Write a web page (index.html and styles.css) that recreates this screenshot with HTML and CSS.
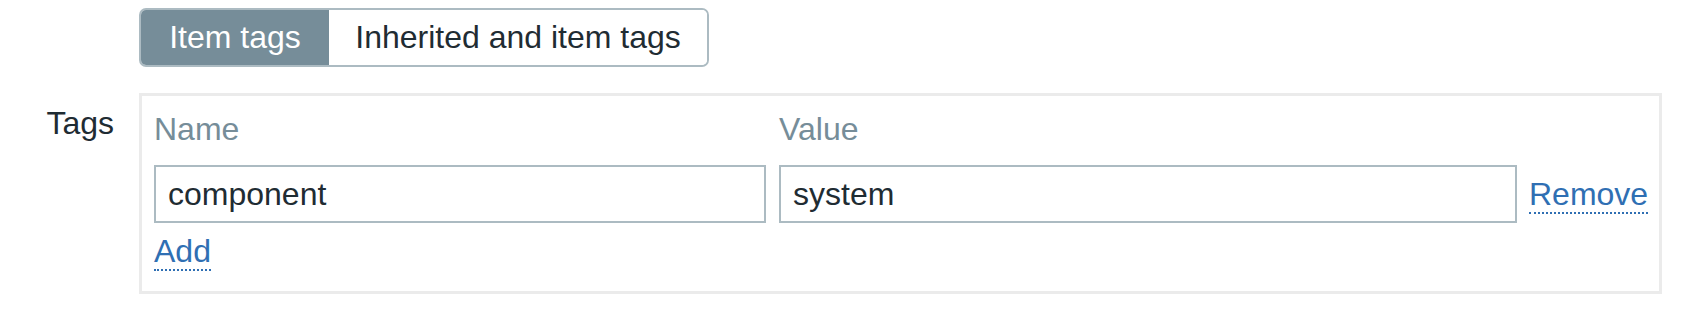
FILE: index.html
```html
<!DOCTYPE html>
<html lang="en">

<head>
    <meta charset="UTF-8">
    <meta name="viewport" content="width=device-width, initial-scale=1.0">
    <title>Tags</title>
    <link rel="stylesheet" href="styles.css">
</head>

<body>
    <div class="form">
        <!-- 切换标签来源 -->
        <div class="form-row top-row">
            <div class="form-label"></div>
            <div class="form-field">
                <div class="radio-segmented">
                    <span class="seg seg-item active">Item tags</span>
                    <span class="seg seg-inherited">Inherited and item tags</span>
                </div>
            </div>
        </div>
        <div class="form-row">
            <div class="form-label tags-label">Tags</div>
            <div class="form-field">
                <div class="tags-box">
                    <table class="tags-table">
                        <thead>
                            <tr>
                                <th class="col-name">Name</th>
                                <th class="col-value">Value</th>
                                <th></th>
                            </tr>
                        </thead>
                        <tbody>
                            <tr>
                                <td><input class="text-input name-input" type="text" value="component"></td>
                                <td><input class="text-input value-input" type="text" value="system"></td>
                                <td class="action-cell"><span class="link-action">Remove</span></td>
                            </tr>
                            <tr>
                                <td colspan="3" class="add-cell"><span class="link-action">Add</span></td>
                            </tr>
                        </tbody>
                    </table>
                </div>
            </div>
        </div>
    </div>
</body>

</html>
```

FILE: styles.css
```css
html * {
    margin: 0;
    padding: 0;
    box-sizing: border-box;
}

body {
    font-family: "Liberation Sans", Arial, sans-serif;
    font-size: 32px;
    line-height: 37px;
    color: #1f2c33;
    background: #fff;
}

.form {
    padding-top: 8px;
}

.form-row {
    display: grid;
    grid-template-columns: 114px 1523px;
    column-gap: 25px;
}

.top-row {
    margin-bottom: 26px;
}

.form-label {
    text-align: right;
}

.tags-label {
    padding-top: 12px;
}

/* 分段按钮 */
.radio-segmented {
    display: inline-flex;
    border: 2px solid #acbbc2;
    border-radius: 7px;
    overflow: hidden;
    height: 59px;
}

.radio-segmented .seg {
    display: flex;
    align-items: center;
    justify-content: center;
    background: #fff;
    color: #1f2c33;
}

.radio-segmented .seg-item {
    width: 188px;
}

.radio-segmented .seg-inherited {
    width: 378px;
}

.radio-segmented .seg.active {
    background: #768d99;
    color: #fff;
}

/* 标签列表 */
.tags-box {
    border: 3px solid #ebebeb;
    padding: 15px 12px 20px 12px;
    height: 201px;
}

.tags-table {
    border-collapse: collapse;
}

.tags-table th {
    font-weight: normal;
    text-align: left;
    color: #768d99;
    padding: 0 0 17px 0;
}

.tags-table td {
    padding: 0;
    vertical-align: middle;
}

.text-input {
    display: block;
    height: 58px;
    border: 2px solid #acbbc2;
    padding: 0 12px;
    font-family: inherit;
    font-size: 32px;
    color: #1f2c33;
    background: #fff;
    outline: none;
}

.name-input {
    width: 612px;
    margin-right: 13px;
}

.value-input {
    width: 738px;
    margin-right: 12px;
}

.action-cell {
    white-space: nowrap;
}

.add-cell {
    padding-top: 10px !important;
}

.link-action {
    color: #2f6fb3;
    border-bottom: 2px dotted #2f6fb3;
    cursor: pointer;
}
```
